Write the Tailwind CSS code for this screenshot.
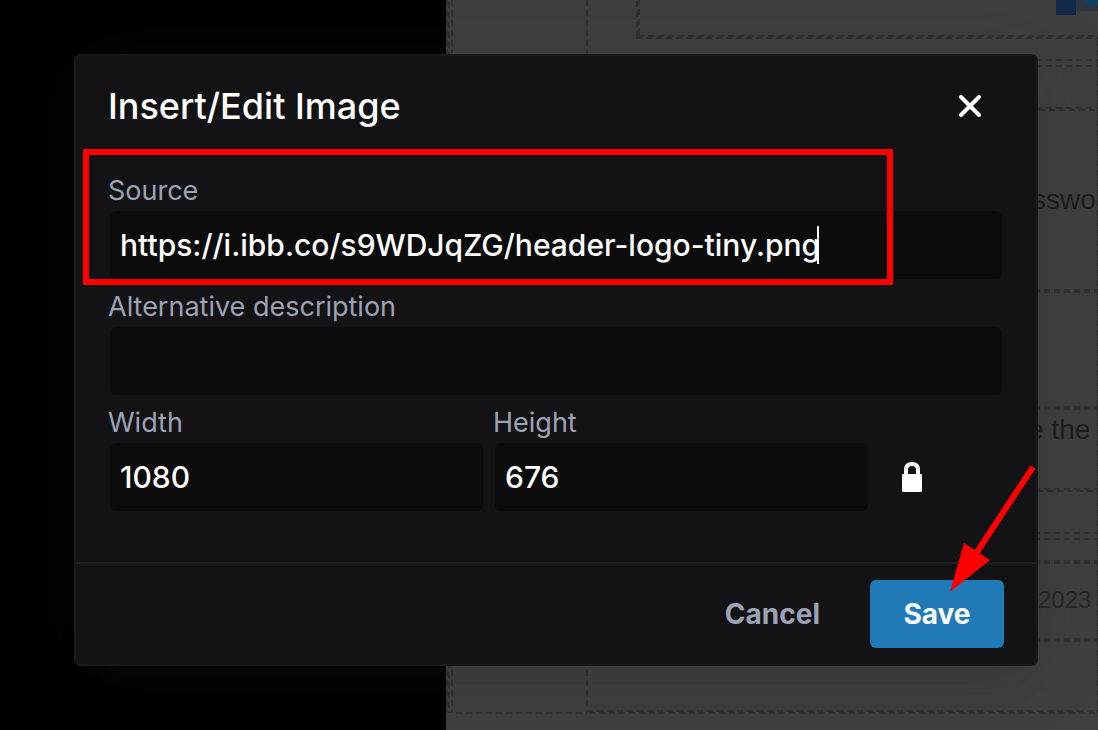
<!DOCTYPE html>
<html lang="en">
<head>
  <meta charset="UTF-8">
  <meta name="viewport" content="width=device-width, initial-scale=1.0">
  <title>Insert/Edit Image</title>
  <script src="https://cdn.jsdelivr.net/npm/@tailwindcss/browser@4"></script>
</head>
<body class="relative min-h-screen overflow-hidden bg-black font-[Inter,sans-serif]">
  <!-- Dimmed editor canvas behind the dialog -->
  <div class="absolute inset-y-0 left-[446px] right-0 overflow-hidden bg-[#3e3f3e]">
    <svg class="absolute left-0 top-0" width="652" height="730" fill="none" stroke="#303130" stroke-width="2" stroke-dasharray="6 4" aria-hidden="true">
      <!-- Table guides -->
      <path d="M1 0V713M3 2V713M6 0V713M141 0V713M191 1V38M193 -1V38"/>
      <path d="M192 36H652M190 38H652M590 60H652M590 66H652M590 108H652M593 110H652"/>
      <path d="M588 489H652M591 491H652M588 533H652M588 539H652"/>
      <path d="M10 713H141M141 711H652M143 713H652"/>
      <path d="M588 291H652M588 408H652M588 562H652M588 640H652" stroke-width="4"/>
      <path d="M651 40V713" stroke-width="1"/>
      <!-- Selected picture with its resize handle -->
      <path d="M630 0H652V11H630Z" fill="#2d3544" stroke="none"/>
      <path d="M636 0Q642 5 652 5V0Z" fill="#06456a" stroke="none"/>
      <path d="M610 0H630V15H610Z" fill="#152a4b" stroke="none"/>
    </svg>
    <p class="absolute left-[586px] top-[184px] font-['Liberation_Sans',sans-serif] text-[28px] leading-8 text-[#1b1d23]">sswo</p>
    <p class="absolute left-[582px] top-[414px] whitespace-nowrap font-['Liberation_Sans',sans-serif] text-[28px] leading-8 text-[#1b1d23]">e the</p>
    <p class="absolute left-[592px] top-[584px] font-['Liberation_Sans',sans-serif] text-[24px] leading-8 text-[#272828]">2023</p>
  </div>

  <!-- Dialog -->
  <div role="dialog" aria-labelledby="dialog-title" class="relative mt-[54px] mr-[60px] ml-[74px] rounded-md border-2 border-[#191a1e] bg-[#131315] shadow-[0_32px_32px_-20px_rgba(34,47,62,0.15),0_0_80px_2px_rgba(34,47,62,0.15)]">
    <header class="flex items-center justify-between pt-[22px] pr-12 pl-8">
      <h1 id="dialog-title" class="text-[36px] leading-[56px] font-medium text-white">Insert/Edit Image</h1>
      <button type="button" aria-label="Close" class="p-1">
        <svg width="28" height="28" viewBox="0 0 28 28" fill="none" stroke="#fff" stroke-width="4" stroke-linecap="round"><path d="M5 5L23 23M23 5L5 23"/></svg>
      </button>
    </header>

    <form id="image-form" class="space-y-2 pt-[37px] pr-[34px] pb-[51px] pl-[34px]">
      <div class="relative">
        <label for="source" class="-ml-0.5 block text-[27px] leading-10 text-[#9ca3b4]">Source</label>
        <input type="text" id="source" value="https://i.ibb.co/s9WDJqZG/header-logo-tiny.png" class="block h-[68px] w-full rounded-md bg-[#0c0c0c] px-[10px] text-[30px] font-medium text-white outline-none">
        <!-- Text cursor -->
        <span class="absolute bottom-[15px] left-[707px] h-[38px] w-0.5 bg-white"></span>
        <!-- Highlight box -->
        <div class="pointer-events-none absolute -top-[22px] -bottom-[6px] -left-[27px] w-[810px] border-6 border-[#ff0000]"></div>
      </div>
      <div>
        <label for="alt" class="-ml-0.5 block text-[27px] leading-10 text-[#9ca3b4]">Alternative description</label>
        <input type="text" id="alt" class="block h-[68px] w-full rounded-md bg-[#0c0c0c] px-[10px] text-[30px] font-medium text-white outline-none">
      </div>
      <div class="flex items-end gap-3">
        <div class="flex-1">
          <label for="width" class="-ml-0.5 block text-[27px] leading-10 text-[#9ca3b4]">Width</label>
          <input type="text" id="width" value="1080" class="block h-[68px] w-full rounded-md bg-[#0c0c0c] px-[10px] text-[30px] font-medium text-white outline-none">
        </div>
        <div class="flex-1">
          <label for="height" class="-ml-0.5 block text-[27px] leading-10 text-[#9ca3b4]">Height</label>
          <input type="text" id="height" value="676" class="block h-[68px] w-full rounded-md bg-[#0c0c0c] px-[10px] text-[30px] font-medium text-white outline-none">
        </div>
        <div class="w-[122px]">
          <button type="button" aria-label="Constrain proportions" class="flex h-[68px] w-16 items-center justify-center">
            <svg width="20" height="30" viewBox="0 0 20 30"><path d="M4 13V8Q4 2 10 2T16 8V13" fill="none" stroke="#fff" stroke-width="4"/><rect y="12" width="20" height="18" rx="1" fill="#fff"/></svg>
          </button>
        </div>
      </div>
    </form>

    <footer class="relative flex justify-end gap-4 border-t-2 border-[#1f2026] py-4 pr-8">
      <button type="button" class="h-[68px] rounded-md px-[34px] text-[28px] font-bold text-[#9ca3b4]">Cancel</button>
      <button type="submit" form="image-form" class="h-[68px] w-[134px] rounded-md bg-[#207ab7] text-[28px] font-bold text-white">Save</button>
      <!-- Arrow pointing at Save -->
      <svg class="pointer-events-none absolute right-0 bottom-[72px]" width="86" height="128" viewBox="0 0 86 128" fill="#ff0000" aria-hidden="true">
        <path d="M83 3L25 91" stroke="#ff0000" stroke-width="6"/>
        <path d="M0 128L14 79L40 96Z"/>
      </svg>
    </footer>
  </div>
</body>
</html>
